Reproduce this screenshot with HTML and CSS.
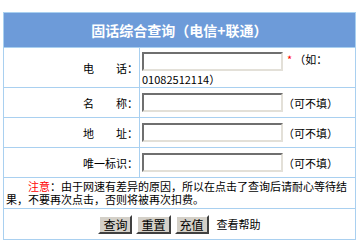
FILE: index.html
```html
<!DOCTYPE html>
<html lang="zh-CN">

<head>
    <meta charset="UTF-8">
    <meta name="viewport" content="width=device-width, initial-scale=1.0">
    <title>固话综合查询</title>
    <link rel="stylesheet" href="styles.css">
</head>

<body>
    <div class="query-box">
        <div class="box-title">固话综合查询（电信+联通）</div>

        <div class="field-row row-phone">
            <div class="field-label"><span class="label-text">电话</span>：</div>
            <div class="field-value">
                <input type="text" class="text-input"><span class="required">*</span>（如：01082512114）
            </div>
        </div>

        <div class="field-row">
            <div class="field-label"><span class="label-text">名称</span>：</div>
            <div class="field-value">
                <input type="text" class="text-input">（可不填）
            </div>
        </div>

        <div class="field-row">
            <div class="field-label"><span class="label-text">地址</span>：</div>
            <div class="field-value">
                <input type="text" class="text-input">（可不填）
            </div>
        </div>

        <div class="field-row">
            <div class="field-label"><span class="label-text">唯一标识</span>：</div>
            <div class="field-value">
                <input type="text" class="text-input">（可不填）
            </div>
        </div>

        <div class="notice">
            <span class="notice-key">注意</span>：由于网速有差异的原因，所以在点击了查询后请耐心等待结果，不要再次点击，否则将被再次扣费。
        </div>

        <div class="actions">
            <button type="button" class="btn">查询</button>
            <button type="button" class="btn">重置</button>
            <button type="button" class="btn">充值</button>
            <a href="#" class="help-link">查看帮助</a>
        </div>
    </div>
</body>

</html>
```

FILE: styles.css
```css
body {
    margin: 0;
    padding: 12px 0 0 3px;
    font-family: "Noto Sans CJK SC", sans-serif;
    font-size: 11px;
    color: #000;
    background-color: #fff;
}

.query-box {
    width: 351px;
    border: 1px solid #a9d0f0;
}

.box-title {
    height: 34px;
    line-height: 34px;
    background-color: #6d9bd9;
    color: #fff;
    font-size: 14px;
    font-weight: bold;
    text-align: center;
    border-bottom: 1px solid #a9d0f0;
}

.field-row {
    display: grid;
    grid-template-columns: 136px 1fr;
    height: 29px;
    border-bottom: 1px solid #a9d0f0;
}

.row-phone {
    height: 39px;
}

.field-label {
    display: flex;
    align-items: center;
    justify-content: flex-end;
    padding-right: 1px;
    border-right: 1px solid #a9d0f0;
}

.label-text {
    display: inline-block;
    width: 44px;
    text-align: justify;
    text-align-last: justify;
}

.field-value {
    display: flex;
    align-items: center;
    padding-left: 2px;
}

.row-phone .field-value {
    display: block;
    padding-top: 3px;
    line-height: 16px;
}

.text-input {
    box-sizing: border-box;
    width: 141px;
    height: 19px;
    margin: 0;
    padding: 0 2px;
    border: 2px solid;
    border-color: #6f6f6f #e3e0d8 #e3e0d8 #6f6f6f;
    background-color: #fff;
    vertical-align: middle;
}

.required {
    display: inline-block;
    margin: 0 2px 0 4px;
    color: #f00;
}

.notice {
    height: 28px;
    padding: 2px 1px 0 2px;
    line-height: 13px;
    text-indent: 22px;
    border-bottom: 1px solid #a9d0f0;
}

.notice-key {
    display: inline-block;
    text-indent: 0;
    color: #f00;
}

.actions {
    display: flex;
    align-items: center;
    justify-content: center;
    gap: 4px;
    height: 30px;
}

.btn {
    box-sizing: border-box;
    height: 19px;
    margin: 0;
    padding: 0 3px;
    font-family: inherit;
    font-size: 12px;
    line-height: 15px;
    color: #000;
    background-color: #d4d0c8;
    border: 2px solid;
    border-color: #fff #404040 #404040 #fff;
}

.help-link {
    margin-left: 4px;
    color: #000;
    text-decoration: none;
}
```
